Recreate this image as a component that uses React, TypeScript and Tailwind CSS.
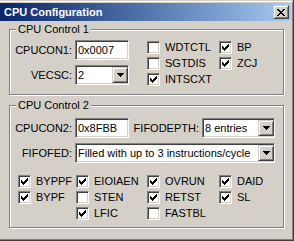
import type { ReactNode } from "react";

const sunken =
  "border border-t-[#808080] border-l-[#808080] border-b-white border-r-white shadow-[inset_1px_1px_0_#404040,inset_-1px_-1px_0_#D4D0C8]";
const raised =
  "border border-t-[#D4D0C8] border-l-[#D4D0C8] border-b-[#404040] border-r-[#404040] shadow-[inset_1px_1px_0_#fff,inset_-1px_-1px_0_#808080] bg-[#D4D0C8]";

const CheckMark = () => (
  <svg width="7" height="7" viewBox="0 0 7 7" shapeRendering="crispEdges">
    <path
      fill="#000"
      d="M6 0h1v1h-1z M5 1h2v1h-2z M0 2h1v1h-1z M4 2h3v1h-3z M0 3h2v1h-2z M3 3h3v1h-3z M0 4h5v1h-5z M1 5h3v1h-3z M2 6h1v1h-1z"
    />
  </svg>
);

const Check = ({ label, checked }: { label?: string; checked?: boolean }) => {
  if (!label) return <div className="h-[13px]" />;
  return (
    <div className="flex items-center h-[13px]">
      <span className={`w-[13px] h-[13px] bg-white flex items-center justify-center shrink-0 ${sunken}`}>
        {checked && <CheckMark />}
      </span>
      <span className="ml-[5px] leading-[13px] whitespace-nowrap">{label}</span>
    </div>
  );
};

const Edit = ({ value, className }: { value: string; className: string }) => (
  <div className={`h-[20px] bg-white flex items-center pl-[2px] leading-[16px] ${sunken} ${className}`}>
    {value}
  </div>
);

const Combo = ({ value, className }: { value: string; className: string }) => (
  <div className={`h-[20px] bg-white flex items-center ${sunken} ${className}`}>
    <span className="flex-1 pl-[2px] leading-[16px] whitespace-nowrap overflow-hidden">{value}</span>
    <span className={`w-[16px] h-[16px] flex items-center justify-center shrink-0 ${raised}`}>
      <svg width="7" height="4" viewBox="0 0 7 4" shapeRendering="crispEdges">
        <path fill="#000" d="M0 0h7v1h-7z M1 1h5v1h-5z M2 2h3v1h-3z M3 3h1v1h-1z" />
      </svg>
    </span>
  </div>
);

const Label = ({ children, className }: { children: ReactNode; className: string }) => (
  <div className={`h-[20px] leading-[20px] text-right pr-[3px] whitespace-nowrap ${className}`}>{children}</div>
);

const Group = ({ title, className, children }: { title: string; className: string; children: ReactNode }) => (
  <div
    className={`ml-[9px] w-[275px] border border-[#808080] shadow-[inset_1px_1px_0_#fff,1px_1px_0_#fff] ${className}`}
  >
    <div className="-mt-[7px] ml-[6px] w-fit px-[2px] h-[13px] leading-[13px] bg-[#D4D0C8]">{title}</div>
    {children}
  </div>
);

export default function App() {
  return (
    <div
      className="w-[294px] h-[241px] bg-[#D4D0C8] border-r border-b border-[#404040] pt-[1px] text-[11px] text-black overflow-hidden"
      style={{ fontFamily: '"Liberation Sans", Arial, sans-serif' }}
    >
      <div className="h-full border-t border-r border-b border-t-white border-r-[#808080] border-b-[#808080] pt-[1px] pr-[1px] flex flex-col">
        {/* Title bar */}
        <div className="h-[18px] flex items-center bg-gradient-to-r from-[#0A246A] to-[#A6CAF0] pl-[4px] pr-[2px]">
          <span className="flex-1 font-bold text-white leading-[18px]">CPU Configuration</span>
          <span className={`w-[16px] h-[14px] flex items-center justify-center ${raised}`}>
            <svg width="8" height="7" viewBox="0 0 8 7" shapeRendering="crispEdges">
              <path
                fill="#000"
                d="M0 0h2v1h-2z M6 0h2v1h-2z M1 1h2v1h-2z M5 1h2v1h-2z M2 2h4v1h-4z M3 3h2v1h-2z M2 4h4v1h-4z M1 5h2v1h-2z M5 5h2v1h-2z M0 6h2v1h-2z M6 6h2v1h-2z"
              />
            </svg>
          </span>
        </div>

        {/* CPU Control 1 */}
        <Group title="CPU Control 1" className="mt-[8px] h-[66px]">
          <div className="flex mt-[4px]">
            <div className="grid grid-cols-[65px_54px] gap-y-[4px]">
              <Label className="">CPUCON1:</Label>
              <Edit value="0x0007" className="w-[54px]" />
              <Label className="">VECSC:</Label>
              <Combo value="2" className="w-[54px]" />
            </div>
            <div className="ml-[18px] mt-[1px] grid grid-cols-[72px_auto] gap-y-[3px] content-start">
              <Check label="WDTCTL" />
              <Check label="BP" checked />
              <Check label="SGTDIS" />
              <Check label="ZCJ" checked />
              <Check label="INTSCXT" checked />
            </div>
          </div>
        </Group>

        {/* CPU Control 2 */}
        <Group title="CPU Control 2" className="mt-[10px] h-[123px]">
          <div className="flex mt-[6px]">
            <Label className="w-[65px]">CPUCON2:</Label>
            <Edit value="0x8FBB" className="w-[54px]" />
            <Label className="w-[73px]">FIFODEPTH:</Label>
            <Combo value="8 entries" className="w-[73px]" />
          </div>
          <div className="flex mt-[5px]">
            <Label className="w-[65px]">FIFOFED:</Label>
            <Combo value="Filled with up to 3 instructions/cycle" className="w-[200px]" />
          </div>
          <div className="mt-[12px] pl-[8px] grid grid-cols-[58px_71px_72px_auto] gap-y-[3px]">
            <Check label="BYPPF" checked />
            <Check label="EIOIAEN" checked />
            <Check label="OVRUN" checked />
            <Check label="DAID" checked />
            <Check label="BYPF" checked />
            <Check label="STEN" />
            <Check label="RETST" checked />
            <Check label="SL" checked />
            <Check />
            <Check label="LFIC" checked />
            <Check label="FASTBL" />
            <Check />
          </div>
        </Group>
      </div>
    </div>
  );
}
